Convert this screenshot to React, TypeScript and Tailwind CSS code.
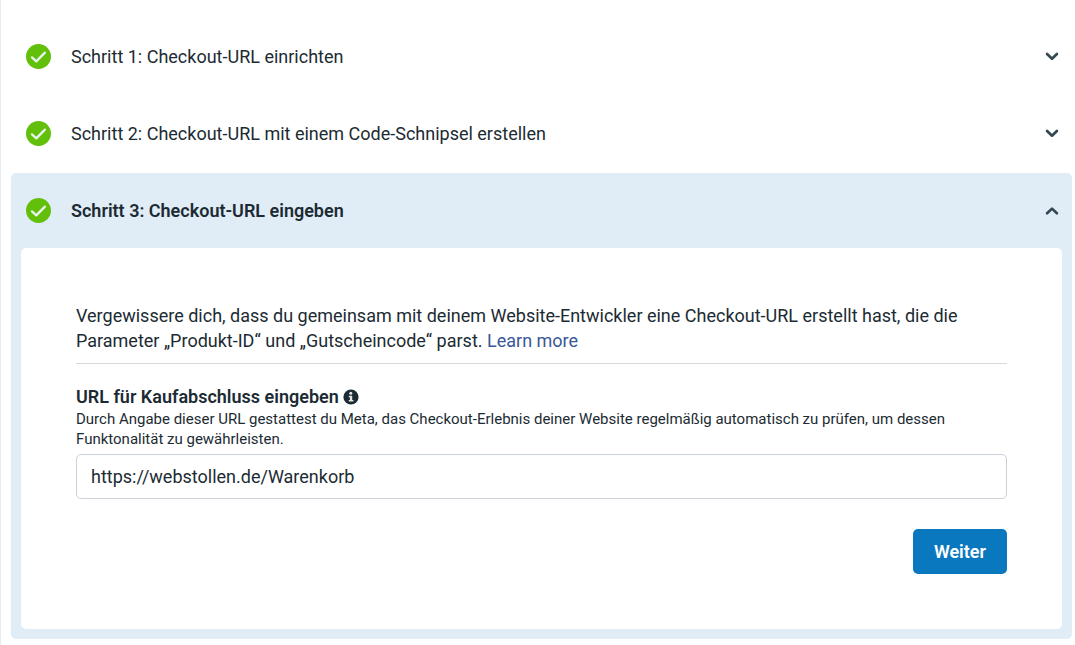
import { useState } from "react";
import type { ReactNode } from "react";

type StepProps = {
  id: string;
  title: string;
  open: boolean;
  onToggle: () => void;
  children?: ReactNode;
};

const CheckBadge = () => (
  <svg viewBox="0 0 25 25" className="h-[25px] w-[25px] shrink-0" aria-hidden="true">
    <circle cx="12.5" cy="12.5" r="12.5" fill="#62bf0a" />
    <path
      d="M6 13.4 L10.3 17.4 L18.9 8.6"
      fill="none"
      stroke="#e9f3f0"
      strokeWidth="2.3"
      strokeLinecap="round"
      strokeLinejoin="round"
    />
  </svg>
);

const Chevron = ({ up }: { up: boolean }) => (
  <svg viewBox="0 0 14 10" className="h-[10px] w-[14px] shrink-0" aria-hidden="true">
    <path
      d={up ? "M2.1 7.3 L7 2.6 L11.9 7.3" : "M2.1 2 L7 6.7 L11.9 2"}
      fill="none"
      stroke="#344854"
      strokeWidth="2.7"
      strokeLinecap="round"
      strokeLinejoin="round"
    />
  </svg>
);

const InfoIcon = () => (
  <svg viewBox="0 0 16 16" className="h-4 w-4 shrink-0" aria-hidden="true">
    <circle cx="8" cy="8" r="7.6" fill="#1c2b33" />
    <circle cx="7.8" cy="4.3" r="1.5" fill="#e4e6e8" />
    <path d="M5.8 6.8 H9.2 V11 H10.4 V12.6 H5.8 V11 H6.9 V8.2 H5.8 Z" fill="#e4e6e8" />
  </svg>
);

const Step = ({ id, title, open, onToggle, children }: StepProps) => {
  return (
    <section className={open ? "rounded-[5px] bg-[#e0edf7]" : "rounded-[5px] bg-white"}>
      <h2>
        <button
          type="button"
          aria-expanded={open}
          aria-controls={id}
          onClick={onToggle}
          className="flex h-[75px] w-full cursor-pointer items-center pr-[13px] pl-[15px] text-left"
        >
          <CheckBadge />
          <span className={open ? "ml-5 flex-1 font-semibold" : "ml-5 flex-1"}>{title}</span>
          <Chevron up={open} />
        </button>
      </h2>

      {open && (
        <div id={id} className="px-[10px] pb-[10px]">
          <div className="rounded-[5px] bg-white p-[55px]">{children}</div>
        </div>
      )}
    </section>
  );
};

const CheckoutUrlForm = () => {
  const [url, setUrl] = useState("https://webstollen.de/Warenkorb");

  return (
    <form onSubmit={(e) => e.preventDefault()}>
      <p className="border-b border-[#d5dae1] pb-[10px] leading-[25px]">
        Vergewissere dich, dass du gemeinsam mit deinem Website-Entwickler eine Checkout-URL
        erstellt hast, die die Parameter „Produkt-ID“ und „Gutscheincode“ parst.{" "}
        <a href="#" className="text-[#385898]">Learn more</a>
      </p>

      <div className="mt-[21px] mb-px flex items-center gap-1 leading-[23px]">
        <label htmlFor="checkout-url" className="font-semibold">
          URL für Kaufabschluss eingeben
        </label>
        <InfoIcon />
      </div>
      <p id="checkout-url-hint" className="text-[15px] leading-5">
        Durch Angabe dieser URL gestattest du Meta, das Checkout-Erlebnis deiner Website regelmäßig
        automatisch zu prüfen, um dessen Funktonalität zu gewährleisten.
      </p>

      <input
        id="checkout-url"
        type="text"
        aria-describedby="checkout-url-hint"
        value={url}
        onChange={(e) => setUrl(e.target.value)}
        className="mt-[5px] block h-[45px] w-full rounded-[5px] border border-[#cbd2d9] bg-white px-[14px]"
      />

      <div className="mt-[30px] flex justify-end">
        <button
          type="submit"
          className="h-[45px] cursor-pointer rounded-[5px] bg-[#0a78be] px-[21px] font-semibold text-white"
        >
          Weiter
        </button>
      </div>
    </form>
  );
};

const App = () => {
  const [openStep, setOpenStep] = useState(3);
  const toggle = (step: number) => setOpenStep(openStep === step ? 0 : step);

  return (
    <main className="flex min-h-screen flex-col gap-[2px] border-l border-[#e9ebee] bg-white pt-[19px] pr-[3px] pb-[6px] pl-[10px] font-[Roboto,sans-serif] text-[18px] text-[#1c2b33]">
      <Step
        id="step-1"
        title="Schritt 1: Checkout-URL einrichten"
        open={openStep === 1}
        onToggle={() => toggle(1)}
      />
      <Step
        id="step-2"
        title="Schritt 2: Checkout-URL mit einem Code-Schnipsel erstellen"
        open={openStep === 2}
        onToggle={() => toggle(2)}
      />
      <Step
        id="step-3"
        title="Schritt 3: Checkout-URL eingeben"
        open={openStep === 3}
        onToggle={() => toggle(3)}
      >
        <CheckoutUrlForm />
      </Step>
    </main>
  );
};

export default App;
